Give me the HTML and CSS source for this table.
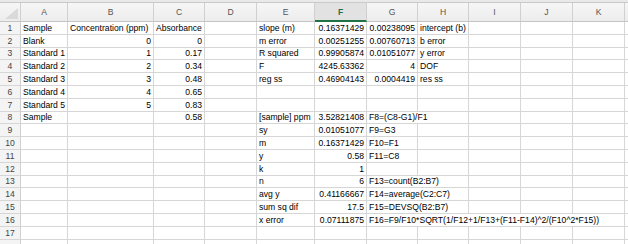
FILE: index.html
```html
<!DOCTYPE html>
<html>
<head>
<meta charset="utf-8">
<link rel="stylesheet" href="styles.css">
</head>
<body>
<div class="sheet">
  <div class="topband"></div>
  <div class="row head">
    <div class="corner"><span class="tri"></span></div>
    <div class="ch">A</div><div class="ch">B</div><div class="ch">C</div><div class="ch">D</div><div class="ch">E</div><div class="ch active">F</div><div class="ch">G</div><div class="ch">H</div><div class="ch">I</div><div class="ch">J</div><div class="ch">K</div><div class="ch last"></div>
  </div>

  <div class="row"><div class="rh">1</div><div class="c">Sample</div><div class="c">Concentration (ppm)</div><div class="c">Absorbance</div><div class="c"></div><div class="c">slope (m)</div><div class="c n">0.16371429</div><div class="c n">0.00238095</div><div class="c">intercept (b)</div><div class="c"></div><div class="c"></div><div class="c"></div><div class="c last"></div></div>
  <div class="row"><div class="rh">2</div><div class="c">Blank</div><div class="c n">0</div><div class="c n">0</div><div class="c"></div><div class="c">m error</div><div class="c n">0.00251255</div><div class="c n">0.00760713</div><div class="c">b error</div><div class="c"></div><div class="c"></div><div class="c"></div><div class="c last"></div></div>
  <div class="row"><div class="rh">3</div><div class="c">Standard 1</div><div class="c n">1</div><div class="c n">0.17</div><div class="c"></div><div class="c">R squared</div><div class="c n">0.99905874</div><div class="c n">0.01051077</div><div class="c">y error</div><div class="c"></div><div class="c"></div><div class="c"></div><div class="c last"></div></div>
  <div class="row"><div class="rh">4</div><div class="c">Standard 2</div><div class="c n">2</div><div class="c n">0.34</div><div class="c"></div><div class="c">F</div><div class="c n">4245.63362</div><div class="c n">4</div><div class="c">DOF</div><div class="c"></div><div class="c"></div><div class="c"></div><div class="c last"></div></div>
  <div class="row"><div class="rh">5</div><div class="c">Standard 3</div><div class="c n">3</div><div class="c n">0.48</div><div class="c"></div><div class="c">reg ss</div><div class="c n">0.46904143</div><div class="c n">0.0004419</div><div class="c">res ss</div><div class="c"></div><div class="c"></div><div class="c"></div><div class="c last"></div></div>
  <div class="row"><div class="rh">6</div><div class="c">Standard 4</div><div class="c n">4</div><div class="c n">0.65</div><div class="c"></div><div class="c"></div><div class="c"></div><div class="c"></div><div class="c"></div><div class="c"></div><div class="c"></div><div class="c"></div><div class="c last"></div></div>
  <div class="row"><div class="rh">7</div><div class="c">Standard 5</div><div class="c n">5</div><div class="c n">0.83</div><div class="c"></div><div class="c"></div><div class="c"></div><div class="c"></div><div class="c"></div><div class="c"></div><div class="c"></div><div class="c"></div><div class="c last"></div></div>
  <div class="row"><div class="rh">8</div><div class="c">Sample</div><div class="c"></div><div class="c n">0.58</div><div class="c"></div><div class="c">[sample] ppm</div><div class="c n">3.52821408</div><div class="c span2">F8=(C8-G1)/F1</div><div class="c"></div><div class="c"></div><div class="c"></div><div class="c last"></div></div>
  <div class="row"><div class="rh">9</div><div class="c"></div><div class="c"></div><div class="c"></div><div class="c"></div><div class="c">sy</div><div class="c n">0.01051077</div><div class="c">F9=G3</div><div class="c"></div><div class="c"></div><div class="c"></div><div class="c"></div><div class="c last"></div></div>
  <div class="row"><div class="rh">10</div><div class="c"></div><div class="c"></div><div class="c"></div><div class="c"></div><div class="c">m</div><div class="c n">0.16371429</div><div class="c">F10=F1</div><div class="c"></div><div class="c"></div><div class="c"></div><div class="c"></div><div class="c last"></div></div>
  <div class="row"><div class="rh">11</div><div class="c"></div><div class="c"></div><div class="c"></div><div class="c"></div><div class="c">y</div><div class="c n">0.58</div><div class="c">F11=C8</div><div class="c"></div><div class="c"></div><div class="c"></div><div class="c"></div><div class="c last"></div></div>
  <div class="row"><div class="rh">12</div><div class="c"></div><div class="c"></div><div class="c"></div><div class="c"></div><div class="c">k</div><div class="c n">1</div><div class="c"></div><div class="c"></div><div class="c"></div><div class="c"></div><div class="c"></div><div class="c last"></div></div>
  <div class="row"><div class="rh">13</div><div class="c"></div><div class="c"></div><div class="c"></div><div class="c"></div><div class="c">n</div><div class="c n">6</div><div class="c span2">F13=count(B2:B7)</div><div class="c"></div><div class="c"></div><div class="c"></div><div class="c last"></div></div>
  <div class="row"><div class="rh">14</div><div class="c"></div><div class="c"></div><div class="c"></div><div class="c"></div><div class="c">avg y</div><div class="c n">0.41166667</div><div class="c span2">F14=average(C2:C7)</div><div class="c"></div><div class="c"></div><div class="c"></div><div class="c last"></div></div>
  <div class="row"><div class="rh">15</div><div class="c"></div><div class="c"></div><div class="c"></div><div class="c"></div><div class="c">sum sq dif</div><div class="c n">17.5</div><div class="c span2">F15=DEVSQ(B2:B7)</div><div class="c"></div><div class="c"></div><div class="c"></div><div class="c last"></div></div>
  <div class="row"><div class="rh">16</div><div class="c"></div><div class="c"></div><div class="c"></div><div class="c"></div><div class="c">x error</div><div class="c n">0.07111875</div><div class="c span5">F16=F9/F10*SQRT(1/F12+1/F13+(F11-F14)^2/(F10^2*F15))</div><div class="c last"></div></div>
  <div class="row"><div class="rh">17</div><div class="c"></div><div class="c"></div><div class="c"></div><div class="c"></div><div class="c"></div><div class="c"></div><div class="c"></div><div class="c"></div><div class="c"></div><div class="c"></div><div class="c"></div><div class="c last"></div></div>
  <div class="row"><div class="rh"></div><div class="c"></div><div class="c"></div><div class="c"></div><div class="c"></div><div class="c"></div><div class="c"></div><div class="c"></div><div class="c"></div><div class="c"></div><div class="c"></div><div class="c"></div><div class="c last"></div></div>
</div>
</body>
</html>
```

FILE: styles.css
```css
html, body {
  margin: 0;
  padding: 0;
  background: #ffffff;
  overflow: hidden;
}

body {
  width: 628px;
  height: 244px;
  font-family: "Liberation Sans", Arial, sans-serif;
  font-size: 8.6px;
  color: #000;
}

.sheet {
  --cols: 21px 47px 86px 51px 52px 58px 52px 51px 51px 52px 52px 52px 1fr;
  width: 628px;
  height: 244px;
  overflow: hidden;
}

.topband {
  height: 2px;
  background: #e9e9e9;
  border-bottom: 1px solid #c9c9c9;
}

.row {
  display: grid;
  grid-template-columns: var(--cols);
  height: 12.8px;
}

.row.head {
  height: 19px;
  background: linear-gradient(#f6f6f6, #ececec);
}

.corner {
  position: relative;
  border-right: 1px solid #d0d0d0;
  border-bottom: 1px solid #c4c4c4;
}

.tri {
  position: absolute;
  right: 2px;
  bottom: 2px;
  width: 0;
  height: 0;
  border-left: 13px solid transparent;
  border-bottom: 11px solid #d9d9d9;
}

.ch {
  display: flex;
  align-items: center;
  justify-content: center;
  color: #555;
  border-right: 1px solid #d0d0d0;
  border-bottom: 1px solid #c4c4c4;
}

.ch.active {
  background: #e2e2e2;
  color: #217346;
  font-weight: bold;
  border-bottom: 2px solid #217346;
}

.ch.last,
.c.last {
  border-right: none;
}

.rh {
  display: flex;
  align-items: center;
  justify-content: center;
  color: #444;
  background: #f4f4f4;
  border-right: 1px solid #cfcfcf;
  border-bottom: 1px solid #d6d6d6;
}

.c {
  display: flex;
  align-items: center;
  padding: 0 2px;
  white-space: nowrap;
  border-right: 1px solid #d6d6d6;
  border-bottom: 1px solid #d6d6d6;
  min-width: 0;
}

.c.n {
  justify-content: flex-end;
}

.span2 {
  grid-column: span 2;
}

.span5 {
  grid-column: span 5;
}
```
